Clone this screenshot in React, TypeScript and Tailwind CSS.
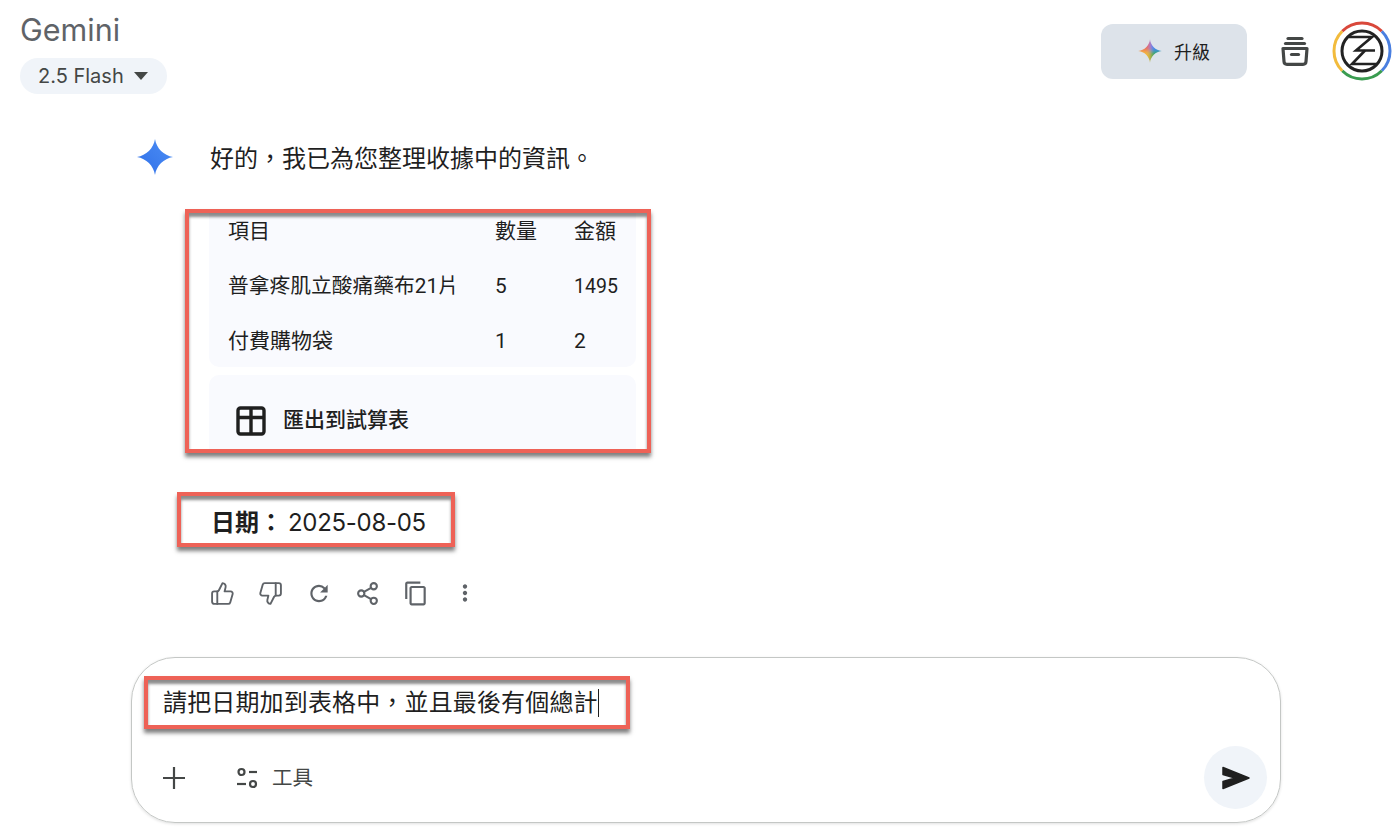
import type { ReactNode } from "react";
import { Share2, ThumbsDown, ThumbsUp } from "lucide-react";
import { MdMoreVert, MdOutlineContentCopy, MdRefresh } from "react-icons/md";

const STAR =
  "M12 0C12.6 6.6 17.4 11.4 24 12C17.4 12.6 12.6 17.4 12 24C11.4 17.4 6.6 12.6 0 12C6.6 11.4 11.4 6.6 12 0Z";

function GeminiStar() {
  return (
    <svg viewBox="0 0 24 24" className="h-[36px] w-[36px] shrink-0">
      <defs>
        <linearGradient id="starBlue" x1="0" y1="1" x2="1" y2="0">
          <stop offset="0" stopColor="#2f6fe8" />
          <stop offset="1" stopColor="#4d8ff5" />
        </linearGradient>
      </defs>
      <path d="M12 0C13 6.2 17.8 11 24 12C17.8 13 13 17.8 12 24C11 17.8 6.2 13 0 12C6.2 11 11 6.2 12 0Z" fill="url(#starBlue)" />
    </svg>
  );
}

function ColorStar() {
  return (
    <svg viewBox="0 0 24 24" className="h-[24px] w-[24px]">
      <defs>
        <clipPath id="starClip">
          <path d={STAR} />
        </clipPath>
        <filter id="soft">
          <feGaussianBlur stdDeviation="2" />
        </filter>
      </defs>
      <g clipPath="url(#starClip)">
        <g filter="url(#soft)">
          <rect x="0" y="0" width="12" height="12" fill="#ea6a5a" />
          <rect x="12" y="0" width="12" height="12" fill="#4285f4" />
          <rect x="12" y="12" width="12" height="12" fill="#34a853" />
          <rect x="0" y="12" width="12" height="12" fill="#f5b93d" />
        </g>
      </g>
    </svg>
  );
}

function ArchiveIcon() {
  return (
    <svg viewBox="0 0 28 30" className="h-[30px] w-[28px] text-[#444746]" fill="none" stroke="currentColor" strokeWidth="3.200" strokeLinecap="round" strokeLinejoin="round">
      <path d="M7 2.500H21" />
      <path d="M4.500 7.500H23.500" />
      <path d="M2 12.500H26L25 25.500C24.900 27.500 24 28.300 22 28.300H6C4 28.300 3.100 27.500 3 25.500Z" />
      <path d="M10.500 18.500H17.500" />
    </svg>
  );
}

function Avatar() {
  return (
    <svg viewBox="0 0 60 60" className="h-[60px] w-[60px]" fill="none">
      <path d="M10.200 10.200A28 28 0 0 1 49.800 10.200" stroke="#d9483b" strokeWidth="3" />
      <path d="M49.800 10.200A28 28 0 0 1 49.800 49.800" stroke="#4a7fe0" strokeWidth="3" />
      <path d="M49.800 49.800A28 28 0 0 1 10.200 49.800" stroke="#3a9c50" strokeWidth="3" />
      <path d="M10.200 49.800A28 28 0 0 1 10.200 10.200" stroke="#f2bb3c" strokeWidth="3" />
      <circle cx="30" cy="30" r="20" stroke="#222" strokeWidth="3" />
      <path d="M17 16H40L24 29.500H43" stroke="#222" strokeWidth="2.600" />
      <path d="M33 29.500L20 43H44" stroke="#222" strokeWidth="2.600" />
    </svg>
  );
}

function TableIcon() {
  return (
    <svg viewBox="0 0 30 30" className="h-[30px] w-[30px]" fill="none" stroke="#1f1f1f" strokeWidth="3.400">
      <rect x="2" y="2" width="26" height="26" rx="2.500" />
      <path d="M2 11.500H28M15 2V28" />
    </svg>
  );
}

function PlusIcon() {
  return (
    <svg viewBox="0 0 24 24" className="h-[24px] w-[24px]" fill="none" stroke="#444746" strokeWidth="2.200">
      <path d="M12 1V23M1 12H23" />
    </svg>
  );
}

function TuneIcon() {
  return (
    <svg viewBox="0 0 24 24" className="h-[24px] w-[24px]" fill="none" stroke="#444746" strokeWidth="2.200">
      <circle cx="6.500" cy="6" r="3" />
      <path d="M14 6H22" />
      <path d="M2 18H11" />
      <circle cx="18" cy="18" r="3" />
    </svg>
  );
}

function SendIcon() {
  return (
    <svg viewBox="0 0 30 24" className="h-[24px] w-[30px]">
      <path d="M2 1.500L28 12L2 22.500V15.500L14 12L2 8.500Z" fill="#1f1f1f" stroke="#1f1f1f" strokeWidth="1.500" strokeLinejoin="round" />
    </svg>
  );
}

// 截圖上的紅色標註框
function Highlight({ className, children }: { className: string; children: ReactNode }) {
  return (
    <div className={`relative overflow-hidden shadow-[0_4px_4px_rgba(0,0,0,0.5)] ${className}`}>
      {children}
      <div className="pointer-events-none absolute inset-0 border-4 border-[#ee6257] shadow-[inset_0_4px_3px_rgba(0,0,0,0.45)]" />
    </div>
  );
}

const rows = [
  { name: "項目", qty: "數量", amount: "金額", cls: "h-[50px] pb-[4px] text-[21px]" },
  { name: "普拿疼肌立酸痛藥布21片", qty: "5", amount: "1495", cls: "h-[54px] pt-[2px] text-[20.750px] [&>span:last-child]:text-[19.500px]" },
  { name: "付費購物袋", qty: "1", amount: "2", cls: "h-[54px] pt-[4px] text-[21px]" },
];

const actionIcons = [
  <ThumbsUp size={25} strokeWidth={1.8} />,
  <ThumbsDown size={25} strokeWidth={1.8} />,
  <MdRefresh size={31} />,
  <Share2 size={25} strokeWidth={2} />,
  <MdOutlineContentCopy size={27} />,
  <MdMoreVert size={26} />,
];

export default function App() {
  return (
    <div lang="zh-TW" className="flex h-[840px] w-[1400px] flex-col overflow-hidden bg-white text-[#1f1f1f] [font-family:Roboto,Noto_Sans_CJK_TC,sans-serif]">
      {/* 頂部列 */}
      <header className="flex h-[94px] shrink-0 items-start justify-between pl-[20px] pr-[8px]">
        <div className="flex flex-col items-start pt-[10px] [font-family:Inter,sans-serif]">
          <p className="text-[30.500px] leading-[40px] text-[#5f6368]">Gemini</p>
          <button className="mt-[8px] flex h-[36px] items-center gap-[10px] rounded-full bg-[#f0f4f9] pl-[18px] pr-[19px] text-[20px] text-[#444746]">
            2.5 Flash
            <span className="h-0 w-0 border-x-[7px] border-t-[8px] border-x-transparent border-t-[#444746]" />
          </button>
        </div>
        <div className="flex items-center pt-[21px]">
          <button className="mr-[-1px] flex h-[55px] w-[146px] items-center justify-center gap-[12px] rounded-[12px] bg-[#dde3ea] text-[18px]">
            <ColorStar />
            <span className="pt-[3px]">升級</span>
          </button>
          <div className="ml-[35px] flex h-[55px] items-center">
            <ArchiveIcon />
          </div>
          <div className="ml-[23px]">
            <Avatar />
          </div>
        </div>
      </header>

      <main className="flex flex-col pl-[131px]">
        {/* 回覆 */}
        <div className="mt-[45px] ml-[6px] flex items-start gap-[37px]">
          <GeminiStar />
          <p className="pt-[2px] text-[24px] leading-[36px]">好的，我已為您整理收據中的資訊。</p>
        </div>

        <Highlight className="mt-[32px] ml-[54px] h-[244px] w-[466px] pl-[24px] pr-[15px]">
          <div className="rounded-b-[10px] bg-[#f9fafe]">
            {rows.map((row) => (
              <div key={row.name} className={`grid grid-cols-[267px_79px_1fr] items-center pl-[19px] ${row.cls}`}>
                <span>{row.name}</span>
                <span>{row.qty}</span>
                <span>{row.amount}</span>
              </div>
            ))}
          </div>
          <div className="mt-[8px] flex h-[92px] items-center gap-[17px] rounded-[10px] bg-[#f9fafe] pl-[27px]">
            <TableIcon />
            <span className="text-[21px] font-medium">匯出到試算表</span>
          </div>
        </Highlight>

        <Highlight className="mt-[39px] ml-[46px] flex h-[55px] w-[278px] items-center gap-[5px] pl-[34px] pt-[6px]">
          <span className="text-[24px] font-bold">日期：</span>
          <span className="text-[24px] tracking-[-0.3px] [font-family:Inter,sans-serif]">2025-08-05</span>
        </Highlight>

        <div className="mt-[33px] ml-[78px] flex gap-[22.600px] text-[#5f6368]">
          {actionIcons.map((icon, i) => (
            <span key={i} className="flex h-[26px] w-[26px] items-center justify-center">
              {icon}
            </span>
          ))}
        </div>

        {/* 輸入框 */}
        <div className="mt-[51px] flex h-[166px] w-[1150px] flex-col rounded-[44px] border border-[#c4c7c5] pl-[12px] pr-[13px] pt-[18px] shadow-[0_1px_3px_rgba(0,0,0,0.12)]">
          <Highlight className="flex h-[53px] w-[486px] items-center pl-[19px]">
            <span className="text-[24px] leading-none tracking-[0.15px]">請把日期加到表格中，並且最後有個總計</span>
            <span className="h-[28px] w-px bg-[#1f1f1f]" />
          </Highlight>
          <div className="mt-[17px] flex items-center justify-between">
            <div className="flex items-center text-[#444746]">
              <span className="ml-[18px]"><PlusIcon /></span>
              <span className="ml-[49px]"><TuneIcon /></span>
              <span className="ml-[13px] pt-[2px] text-[20.500px]">工具</span>
            </div>
            <button className="flex h-[63px] w-[63px] items-center justify-center rounded-full bg-[#f0f4f9]">
              <SendIcon />
            </button>
          </div>
        </div>
      </main>
    </div>
  );
}
